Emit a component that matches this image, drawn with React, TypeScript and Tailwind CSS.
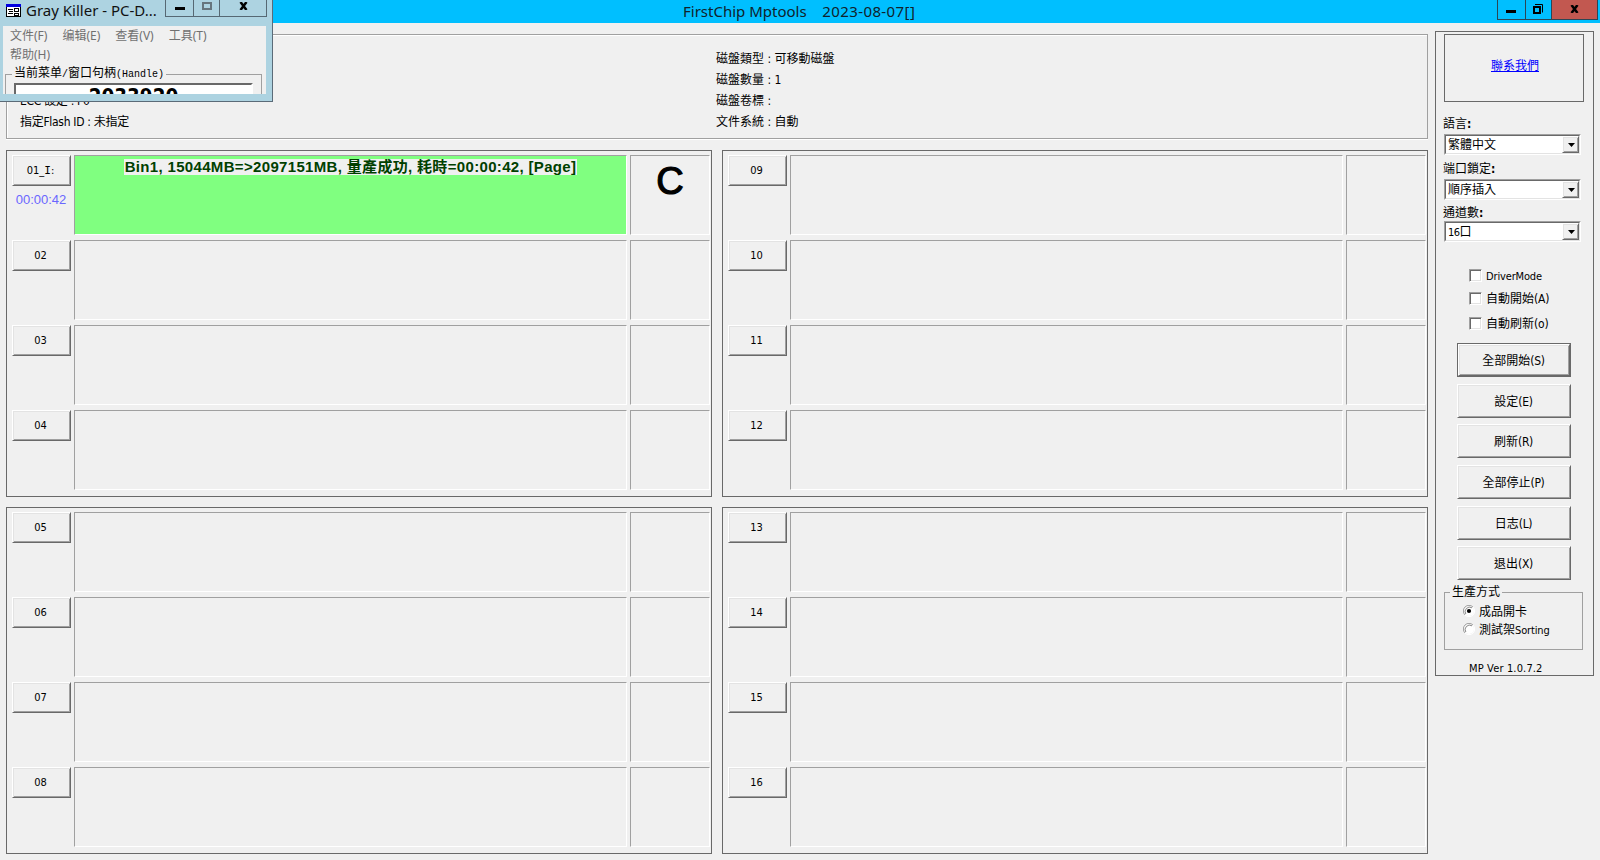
import React from "react";

const ui = "font-['DejaVu_Sans_Condensed','Noto_Sans_CJK_TC',sans-serif]";
const raised =
  "shrink-0 border border-t-white border-l-white border-r-[#696969] border-b-[#696969] shadow-[inset_1px_1px_0_#e3e3e3,inset_-1px_-1px_0_#a0a0a0] bg-[#f0f0f0]";
const sunken = "border border-t-[#a0a0a0] border-l-[#a0a0a0] border-r-white border-b-white";

function Slot({ n, active }: { n: string; active?: boolean }) {
  return (
    <div className="flex h-[80px] shrink-0 gap-[3px]">
      <div className="flex w-[59px] flex-col items-center">
        <button className={`${raised} flex h-[31px] w-[59px] items-center justify-center pr-[2px] text-[11px] leading-none`}>
          {active ? (
            <span>
              01_<span className="font-['DejaVu_Sans_Mono',monospace]">I</span>:
            </span>
          ) : (
            n
          )}
        </button>
        {active && (
          <div className="mt-[7px] whitespace-nowrap pr-px font-['Liberation_Sans',sans-serif] text-[13px] leading-[14px] text-[#6a66ff]">
            00:00:42
          </div>
        )}
      </div>
      <div className={`${sunken} flex w-[553px] items-start justify-center ${active ? "bg-[#80ff80]" : ""}`}>
        {active && (
          <div className="mt-[3px] h-[16px] whitespace-nowrap bg-[#f0f0f0] px-px font-['Liberation_Sans','Noto_Sans_CJK_TC',sans-serif] text-[15px] leading-[16px] font-bold tracking-[0.33px] text-[#004000]">
            Bin1, 15044MB=&gt;2097151MB, 量產成功, 耗時=00:00:42, [Page]
          </div>
        )}
      </div>
      <div className={`${sunken} flex w-[80px] justify-center`}>
        {active && (
          <div className="mt-[5px] font-['Liberation_Sans',sans-serif] text-[38px] leading-[40px] [-webkit-text-stroke:1.2px_#000]">
            C
          </div>
        )}
      </div>
    </div>
  );
}

function Bank({ slots }: { slots: string[] }) {
  return (
    <section className="flex h-[347px] w-[706px] flex-col gap-[5px] border border-[#696969] pt-[4px] pl-[5px]">
      {slots.map((n) => (
        <Slot key={n} n={n} active={n === "01"} />
      ))}
    </section>
  );
}

function Select({ value }: { value: React.ReactNode }) {
  return (
    <div className="flex h-[21px] w-[137px] border border-t-[#a0a0a0] border-l-[#a0a0a0] border-r-white border-b-white">
      <div className="flex w-full border border-t-[#696969] border-l-[#696969] border-r-[#e3e3e3] border-b-[#e3e3e3] bg-white">
        <span className="flex-1 pl-[2px] text-[12px] leading-[19px]">{value}</span>
        <span className={`${raised} flex h-[17px] w-[17px] items-center justify-center`}>
          <svg className="mt-px ml-px" width="7" height="4" viewBox="0 0 7 4">
            <path d="M0 0h7L3.5 4z" fill="#000" />
          </svg>
        </span>
      </div>
    </div>
  );
}

function FieldLabel({ text, className }: { text: string; className: string }) {
  return (
    <div className={`-ml-px text-[12px] leading-[20px] ${className}`}>
      {text}
      <span className="font-bold">:</span>
    </div>
  );
}

function Check({ children }: { children: React.ReactNode }) {
  return (
    <label className="flex h-[13px] items-center">
      <span className="h-[13px] w-[13px] border border-t-[#a0a0a0] border-l-[#a0a0a0] border-r-white border-b-white bg-white shadow-[inset_1px_1px_0_#696969,inset_-1px_-1px_0_#e3e3e3]" />
      <span className="mt-[2px] ml-[4px] whitespace-nowrap text-[12px] leading-[13px]">{children}</span>
    </label>
  );
}

function Radio({ checked }: { checked?: boolean }) {
  return (
    <svg width="12" height="12" viewBox="0 0 12 12" className="mt-[-2px] shrink-0">
      <circle cx="6" cy="6" r="5" fill="#fff" />
      <path d="M2 10A5.500 5.500 0 0 1 10 2" fill="none" stroke="#a0a0a0" />
      <path d="M2.800 9A4.500 4.500 0 0 1 9 2.800" fill="none" stroke="#696969" strokeWidth="0.800" />
      <path d="M10 2A5.500 5.500 0 0 1 2 10" fill="none" stroke="#fff" />
      {checked && <circle cx="6" cy="6" r="2.100" fill="#000" />}
    </svg>
  );
}

function Command({ label, primary, className }: { label: React.ReactNode; primary?: boolean; className: string }) {
  return (
    <button
      className={`flex h-[34px] w-[114px] items-center justify-center text-[12px] ${
        primary ? "border border-[#696969]" : ""
      } ${className}`}
    >
      <span className={`${raised} flex h-full w-full items-center justify-center pt-[2px] pr-px`}>{label}</span>
    </button>
  );
}

function Key({ text, k }: { text: string; k: string }) {
  return (
    <span className="whitespace-nowrap">
      {text}
      <span className="tracking-[-0.3px]">({k})</span>
    </span>
  );
}

function Sidebar() {
  return (
    <aside className="mt-[8px] ml-[7px] flex h-[645px] w-[159px] flex-col border border-[#696969] pt-[2px] pl-[8px] [&>*]:shrink-0">
      <div className="flex h-[68px] w-[140px] items-center justify-center border border-[#696969] text-[12px] text-[#0000ff] underline">
        <span className="mt-[-4px] ml-[2px]">聯系我們</span>
      </div>
      <FieldLabel className="mt-[12px] h-[20px]" text="語言" />
      <Select value="繁體中文" />
      <FieldLabel className="mt-[4px] h-[20px]" text="端口鎖定" />
      <Select value="順序插入" />
      <FieldLabel className="mt-[3px] h-[18px]" text="通道數" />
      <Select
        value={
          <>
            <span className="text-[11px] tracking-[-0.5px]">16</span>口
          </>
        }
      />
      <div className="mt-[27px] flex flex-col pl-[25px]">
        <Check>
          <span className="text-[11px] tracking-[-0.15px]">DriverMode</span>
        </Check>
        <div className="h-[10px]" />
        <Check>
          自動開始<span className="tracking-[-0.2px]">(A)</span>
        </Check>
        <div className="h-[12px]" />
        <Check>
          自動刷新<span className="tracking-[-0.2px]">(o)</span>
        </Check>
      </div>
      <div className="flex flex-col pl-[13px]">
        <Command className="mt-[13px]" primary label={<Key text="全部開始" k="S" />} />
        <Command className="mt-[7px]" label={<Key text="設定" k="E" />} />
        <Command className="mt-[6px]" label={<Key text="刷新" k="R" />} />
        <Command className="mt-[7px]" label={<Key text="全部停止" k="P" />} />
        <Command className="mt-[7px]" label={<Key text="日志" k="L" />} />
        <Command className="mt-[6px]" label={<Key text="退出" k="X" />} />
      </div>
      <fieldset className="mt-[4px] h-[66px] w-[139px] border border-[#a0a0a0] pl-[18px] text-[12px]">
        <legend className="ml-[-13px] px-[2px] leading-[16px]">生產方式</legend>
        <label className="mt-[3px] flex h-[18px] items-center gap-[4px] leading-[18px] whitespace-nowrap">
          <Radio checked />
          成品開卡
        </label>
        <label className="flex h-[18px] items-center gap-[4px] leading-[18px] whitespace-nowrap">
          <Radio />
          <span>
            測試架<span className="text-[11px] tracking-[-0.15px]">Sorting</span>
          </span>
        </label>
      </fieldset>
      <div className="mt-[10px] ml-[25px] text-[11px] leading-[17px] tracking-[0.15px]">MP Ver 1.0.7.2</div>
    </aside>
  );
}

function GrayKiller() {
  return (
    <div className="absolute top-0 left-0 flex h-[102px] w-[273px] flex-col border-r border-b border-[#5b6b78] bg-[#add3e1] px-[3px]">
      <div className="flex h-[26px] shrink-0">
        <svg className="mt-[4px] ml-[3px]" width="15" height="13" viewBox="0 0 15 13" shapeRendering="crispEdges">
          <path d="M0 0h15v13H0z" fill="#000" />
          <path d="M0 0h15v3H0z" fill="#0000e0" />
          <path d="M1 3h13v9H1z" fill="#fff" />
          <path d="M2 5h5v1H2zM3 7h4v1H3zM2 9h5v1H2zM8 4h5v4H8zM8 9h5v3H8z" fill="#000" />
          <path d="M9 5h3v2H9zM9 10h3v1H9z" fill="#fff" />
        </svg>
        <div className="ml-[5px] w-[139px] font-['Noto_Sans',sans-serif] text-[15px] leading-[21px] whitespace-nowrap text-[#111]">
          Gray Killer - PC-D...
        </div>
        <div className="flex h-[17px] w-[102px] border border-t-0 border-[#566873]">
          <span className="flex w-[28px] justify-center border-r border-[#566873]">
            <i className="mt-[7px] h-[3px] w-[10px] bg-black" />
          </span>
          <span className="flex w-[26px] justify-center border-r border-[#566873]">
            <i className="mt-[2px] h-[8px] w-[10px] border-2 border-[#66757d]" />
          </span>
          <span className="flex flex-1 justify-center">
            <svg className="mt-[2px]" width="9" height="8" viewBox="0 0 9 8">
              <path d="M1.500 0L7.500 8M7.500 0L1.500 8" stroke="#000" strokeWidth="2.500" />
            </svg>
          </span>
        </div>
      </div>
      <div className="flex h-[68px] w-[263px] flex-col overflow-hidden bg-[#f0f0f0] pl-[8px] font-['Noto_Sans','Noto_Sans_CJK_SC',sans-serif] text-[12px] text-[#707070]">
        <div className="-ml-px flex h-[19px] shrink-0 gap-[15px] leading-[20px] whitespace-nowrap">
          <span>文件(F)</span>
          <span>编辑(E)</span>
          <span>查看(V)</span>
          <span>工具(T)</span>
        </div>
        <div className="-ml-px h-[19px] shrink-0 leading-[20px]">帮助(H)</div>
        <fieldset className="mt-px ml-[-6px] h-[60px] w-[257px] shrink-0 border border-[#a0a0a0] pl-[8px] text-black">
          <legend className="ml-[-2px] px-[2px] text-[12px] leading-[16px] whitespace-nowrap">
            <span>当前菜单</span>
            <span className="font-['Liberation_Mono',monospace] text-[10px]">/</span>
            <span>窗口句柄</span>
            <span className="font-['Liberation_Mono',monospace] text-[10px]">(Handle)</span>
          </legend>
          <div className="h-[40px] w-[239px] border-2 border-t-[#696969] border-l-[#696969] border-r-white border-b-white bg-white text-center font-['DejaVu_Sans_Condensed',sans-serif] text-[20.4px] leading-[24px] font-bold">
            2033920
          </div>
        </fieldset>
      </div>
    </div>
  );
}

function Info({ lines, className }: { lines: string[]; className: string }) {
  return (
    <div className={`flex flex-col text-[12px] leading-[21px] whitespace-pre ${className}`}>
      {lines.map((l) => (
        <span key={l}>{l}</span>
      ))}
    </div>
  );
}

export default function App() {
  return (
    <div className={`relative h-[860px] w-[1600px] overflow-hidden bg-[#f0f0f0] text-black ${ui}`}>
      <header className="flex h-[23px] bg-[#00bfff]">
        <div className="w-[1497px] pl-[683px] font-['Noto_Sans',sans-serif] text-[15px] leading-[22px] whitespace-pre text-[#10222b]">
          FirstChip Mptools    <span className="tracking-[0.4px]">2023-08-07[]</span>
        </div>
        <div className="flex h-[20px] w-[101px] border border-t-0 border-[#2b4655]">
          <span className="flex w-[28px] justify-center border-r border-[#2b4655] pr-[2px]">
            <i className="mt-[10px] h-[3px] w-[10px] bg-black" />
          </span>
          <span className="flex w-[26px] justify-center border-r border-[#2b4655] pr-px">
            <svg className="mt-[4px]" width="10" height="10" viewBox="0 0 10 10">
              <path d="M1 3h6v6H1z" fill="none" stroke="#000" strokeWidth="2" />
              <path d="M2 .5h7.500v8" fill="none" stroke="#000" />
            </svg>
          </span>
          <span className="flex flex-1 justify-center bg-[#c25850]">
            <svg className="mt-[5px]" width="9" height="8" viewBox="0 0 9 8">
              <path d="M1.500 0L7.500 8M7.500 0L1.500 8" stroke="#000" strokeWidth="2.500" />
            </svg>
          </span>
        </div>
      </header>
      <div className="flex">
        <main className="ml-[6px] flex w-[1422px] shrink-0 flex-col pt-[11px]">
          <section className="flex h-[105px] border border-[#a0a0a0] shadow-[inset_1px_1px_0_#fff,0_1px_0_#fff]">
            <Info
              className="w-[709px] pt-[56px] pl-[13px] tracking-[-0.3px]"
              lines={["ECC 設定 : F0", "指定Flash ID : 未指定"]}
            />
            <Info className="pt-[14px]" lines={["磁盤類型 : 可移動磁盤", "磁盤數量 : 1", "磁盤卷標 :", "文件系統 : 自動"]} />
          </section>
          <div className="mt-[11px] grid grid-cols-[706px_706px] gap-[10px]">
            <Bank slots={["01", "02", "03", "04"]} />
            <Bank slots={["09", "10", "11", "12"]} />
            <Bank slots={["05", "06", "07", "08"]} />
            <Bank slots={["13", "14", "15", "16"]} />
          </div>
        </main>
        <Sidebar />
      </div>
      <GrayKiller />
    </div>
  );
}
